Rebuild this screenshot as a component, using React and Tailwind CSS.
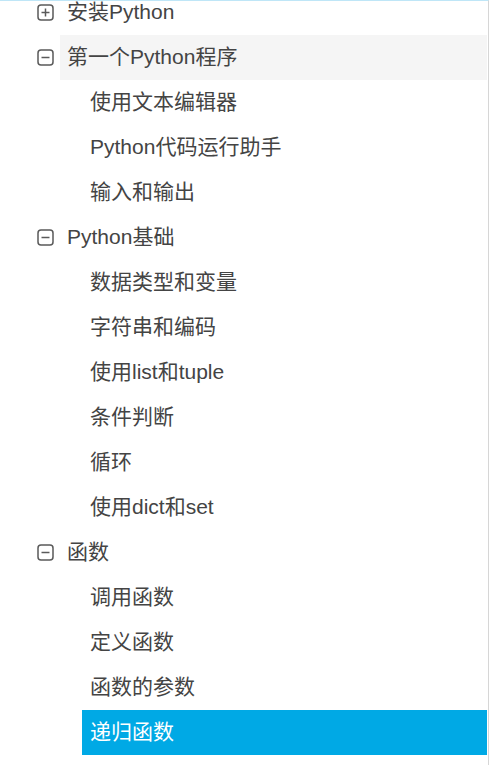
import React from 'react'

const tree = [
  { title: '安装Python', open: false },
  {
    title: '第一个Python程序',
    open: true,
    hover: true,
    children: ['使用文本编辑器', 'Python代码运行助手', '输入和输出'],
  },
  {
    title: 'Python基础',
    open: true,
    children: ['数据类型和变量', '字符串和编码', '使用list和tuple', '条件判断', '循环', '使用dict和set'],
  },
  {
    title: '函数',
    open: true,
    children: ['调用函数', '定义函数', '函数的参数', '递归函数'],
  },
]

const active = '递归函数'

function ToggleIcon({ open }) {
  return (
    <svg width="17" height="17" viewBox="0 0 17 17" className="shrink-0">
      <rect x="1" y="1" width="15" height="15" rx="3" fill="none" stroke="#5a5a5a" strokeWidth="1.5" />
      <line x1="4.5" y1="8.5" x2="12.5" y2="8.5" stroke="#5a5a5a" strokeWidth="1.5" />
      {!open && <line x1="8.5" y1="4.5" x2="8.5" y2="12.5" stroke="#5a5a5a" strokeWidth="1.5" />}
    </svg>
  )
}

export default function App() {
  return (
    <div
      className="h-[765px] w-[494px] overflow-hidden bg-white"
      style={{ fontFamily: '"Liberation Sans", "Noto Sans CJK SC", sans-serif' }}
    >
      <div className="h-full w-[489px] border-t border-t-[#bfe6f7] border-r border-r-[#d6d6d6]">
        <ul className="-mt-[11px] pr-[1px] text-[21px] text-[#444]">
          {tree.map((node) => (
            <li key={node.title}>
              <div className="flex h-[45px] items-center">
                <div className="flex w-[60px] justify-end pr-[6px]">
                  <ToggleIcon open={node.open} />
                </div>
                <div
                  className={`flex h-full flex-1 items-center pb-[2px] pl-[7px] ${node.hover ? 'bg-[#f5f5f5]' : ''}`}
                >
                  {node.title}
                </div>
              </div>
              {node.open && node.children && (
                <ul>
                  {node.children.map((child) => (
                    <li key={child} className="flex h-[45px] pl-[82px]">
                      <div
                        className={`flex flex-1 items-center pb-[2px] pl-[8px] ${
                          child === active ? 'bg-[#00a9e5] text-white' : ''
                        }`}
                      >
                        {child}
                      </div>
                    </li>
                  ))}
                </ul>
              )}
            </li>
          ))}
        </ul>
      </div>
    </div>
  )
}
